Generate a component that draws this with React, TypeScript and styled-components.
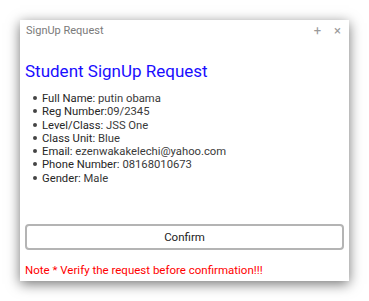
import React from 'react';
import styled, { createGlobalStyle } from 'styled-components';

const GlobalStyle = createGlobalStyle`
  body {
    margin: 0;
    background: #ffffff;
    font-family: Roboto, "Liberation Sans", sans-serif;
  }
`;

const Page = styled.div`
  width: 369px;
  height: 301px;
  padding: 20px;
  box-sizing: border-box;
`;

const Window = styled.div`
  width: 329px;
  height: 261px;
  background: #ffffff;
  box-shadow: 0 3px 12px rgba(0, 0, 0, 0.55);
  display: flex;
  flex-direction: column;
`;

const TitleBar = styled.div`
  display: flex;
  align-items: center;
  height: 20px;
  padding: 0 8px 0 6px;
  color: #7a7a7a;
  font-size: 11px;
`;

const Title = styled.span`
  flex: 1;
`;

const TitleButton = styled.span`
  color: #9a9a9a;
  font-size: 13px;
  margin-left: 13px;
  line-height: 1;
`;

const Body = styled.div`
  flex: 1;
  display: flex;
  flex-direction: column;
  padding: 0 5px;
`;

const Heading = styled.h1`
  margin: 20px 0 0 0;
  font-size: 17px;
  font-weight: 400;
  line-height: 22px;
  color: #1a0dff;
`;

const Details = styled.ul`
  margin: 10px 0 0 0;
  padding: 0;
  list-style: none;
  font-size: 11.25px;
  line-height: 13.3px;
  color: #3a3a3a;
`;

const Item = styled.li`
  padding-left: 17px;

  &::before {
    content: '';
    display: inline-block;
    width: 4px;
    height: 4px;
    border-radius: 50%;
    background: #444444;
    margin-left: -9px;
    margin-right: 5px;
    vertical-align: 2px;
  }
`;

const Label = styled.span`
  color: #262626;
`;

const ConfirmButton = styled.button`
  margin-top: auto;
  height: 26px;
  width: 100%;
  background: #ffffff;
  border: 2px solid #b4b4b4;
  border-radius: 4px;
  font-family: Roboto, "Liberation Sans", sans-serif;
  font-size: 11.5px;
  color: #222222;
`;

const Note = styled.p`
  margin: 13px 0 4px 0;
  font-size: 11.5px;
  line-height: 14px;
  color: #ff0000;
`;

const details: [string, string][] = [
  ['Full Name:', ' putin obama'],
  ['Reg Number:', '09/2345'],
  ['Level/Class:', ' JSS One'],
  ['Class Unit:', ' Blue'],
  ['Email:', ' ezenwakakelechi@yahoo.com'],
  ['Phone Number:', ' 08168010673'],
  ['Gender:', ' Male'],
];

export default function App() {
  return (
    <Page>
      <GlobalStyle />
      <Window>
        <TitleBar>
          <Title>SignUp Request</Title>
          <TitleButton>+</TitleButton>
          <TitleButton>×</TitleButton>
        </TitleBar>
        <Body>
          <Heading>Student SignUp Request</Heading>
          <Details>
            {details.map(([label, value]) => (
              <Item key={label}>
                <Label>{label}</Label>
                {value}
              </Item>
            ))}
          </Details>
          <ConfirmButton>Confirm</ConfirmButton>
          <Note>Note * Verify the request before confirmation!!!</Note>
        </Body>
      </Window>
    </Page>
  );
}
